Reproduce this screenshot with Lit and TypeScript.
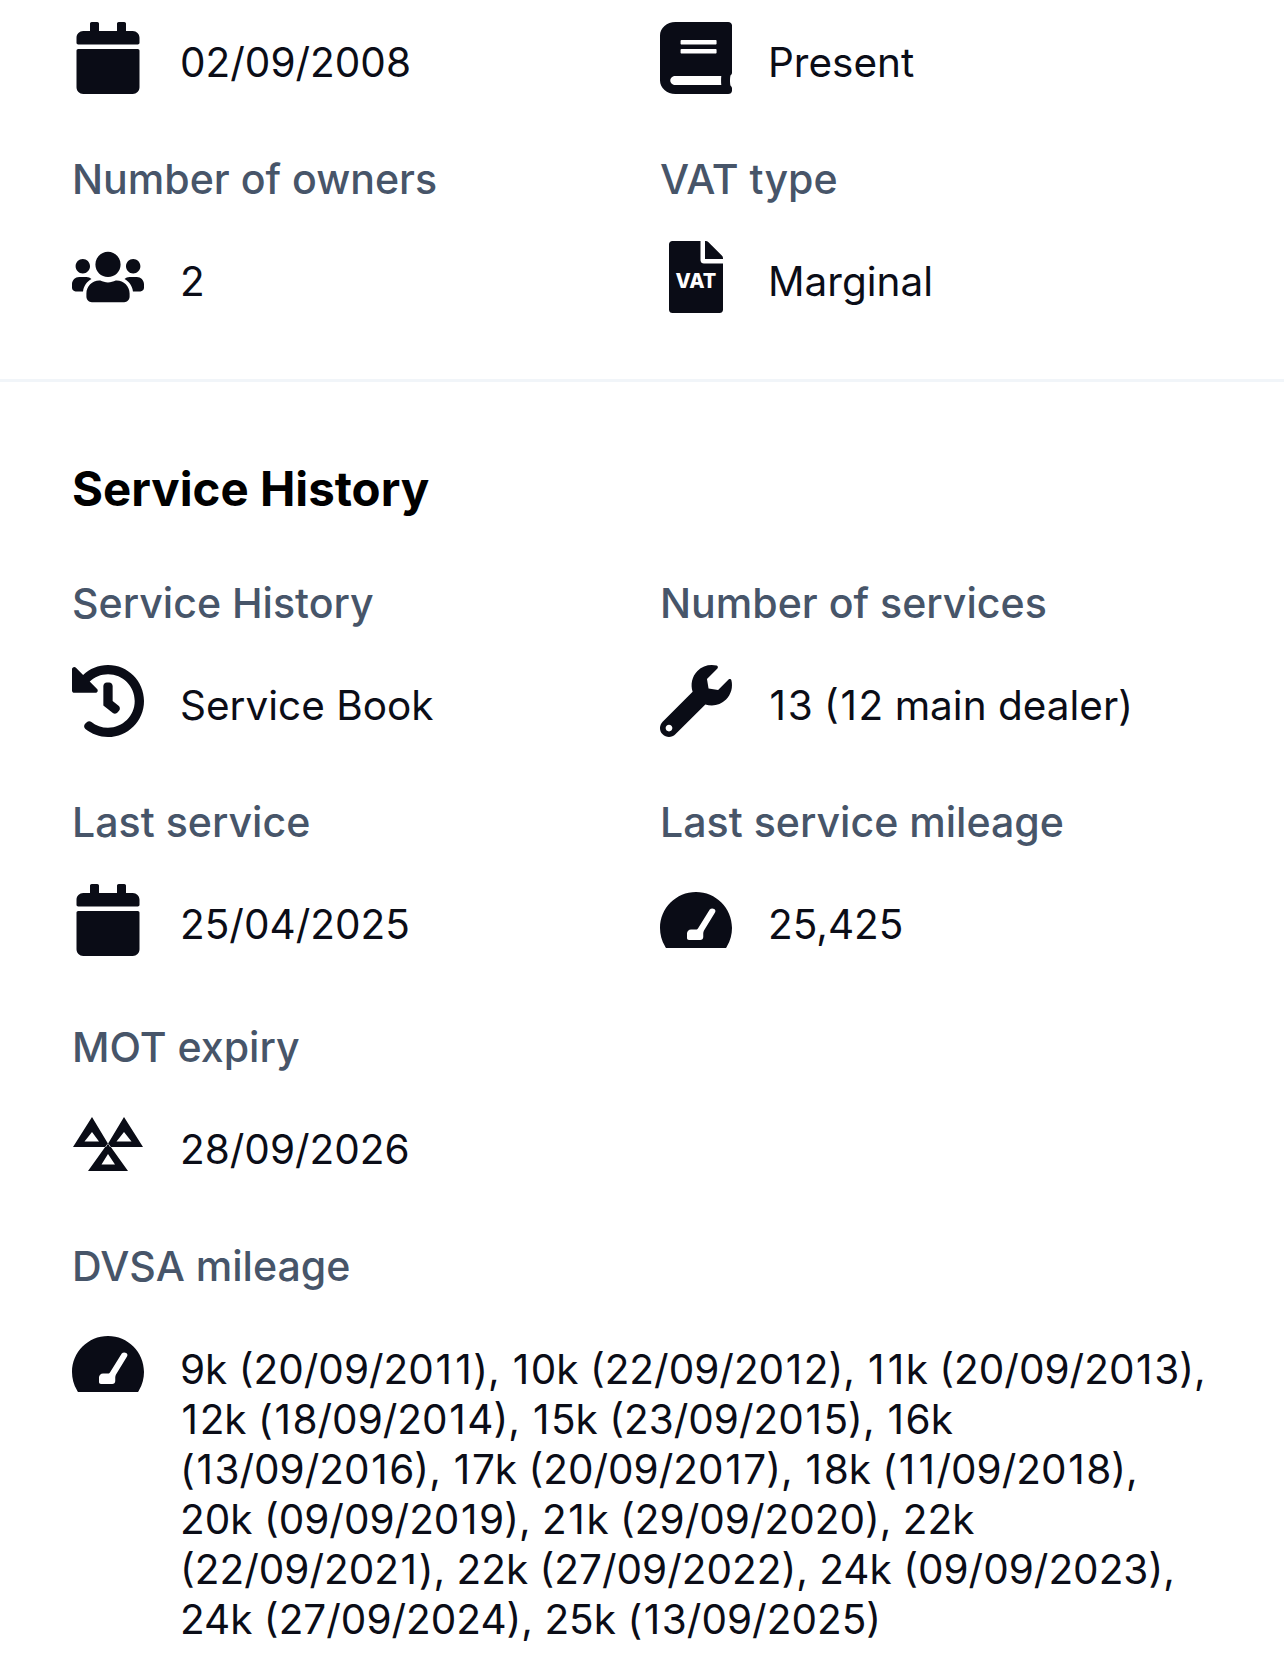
import { LitElement, html, css } from "lit";
import { customElement } from "lit/decorators.js";

const fa = (vb: string, d: string, par = "xMidYMid meet") => html`<svg class="ic" viewBox="${vb}" preserveAspectRatio="${par}" aria-hidden="true"><path d="${d}"></path></svg>`;

const calendar = fa("0 0 448 512", "M12 192h424c6.6 0 12 5.4 12 12v260c0 26.5-21.5 48-48 48H48c-26.5 0-48-21.5-48-48V204c0-6.6 5.4-12 12-12zm436-44v-36c0-26.5-21.5-48-48-48h-48V12c0-6.6-5.4-12-12-12h-40c-6.6 0-12 5.4-12 12v52H160V12c0-6.6-5.4-12-12-12h-40c-6.6 0-12 5.4-12 12v52H48C21.5 64 0 85.5 0 112v36c0 6.6 5.4 12 12 12h424c6.6 0 12-5.4 12-12z");
const book = fa("0 0 448 512", "M448 360V24c0-13.3-10.7-24-24-24H96C43 0 0 43 0 96v320c0 53 43 96 96 96h328c13.3 0 24-10.7 24-24v-16c0-7.5-3.5-14.3-8.9-18.7-4.2-15.4-4.2-59.3 0-74.7 5.4-4.3 8.9-11.1 8.9-18.6zM128 134c0-3.3 2.7-6 6-6h212c3.3 0 6 2.7 6 6v20c0 3.3-2.7 6-6 6H134c-3.3 0-6-2.7-6-6v-20zm0 64c0-3.3 2.7-6 6-6h212c3.3 0 6 2.7 6 6v20c0 3.3-2.7 6-6 6H134c-3.3 0-6-2.7-6-6v-20zm253.4 250H96c-17.7 0-32-14.3-32-32 0-17.6 14.4-32 32-32h285.4c-1.9 17.1-1.9 46.9 0 64z", "none");
const users = fa("0 0 640 512", "M96 224c35.3 0 64-28.7 64-64s-28.7-64-64-64-64 28.7-64 64 28.7 64 64 64zm448 0c35.3 0 64-28.7 64-64s-28.7-64-64-64-64 28.7-64 64 28.7 64 64 64zm32 32h-64c-17.6 0-33.5 7.1-45.1 18.6 40.3 22.1 68.9 62 75.1 109.4h66c17.7 0 32-14.3 32-32v-32c0-35.3-28.7-64-64-64zm-256 0c61.9 0 112-50.1 112-112S381.9 32 320 32 208 82.1 208 144s50.1 112 112 112zm76.8 32h-8.3c-20.8 10-43.9 16-68.5 16s-47.6-6-68.5-16h-8.3C179.6 288 128 339.6 128 403.2V432c0 26.5 21.5 48 48 48h288c26.5 0 48-21.5 48-48v-28.8c0-63.6-51.6-115.2-115.2-115.2zm-223.7-13.4C161.5 263.1 145.6 256 128 256H64c-35.3 0-64 28.7-64 64v32c0 17.7 14.3 32 32 32h65.9c6.3-47.4 34.9-87.3 75.2-109.4z");
const history = fa("8 8 496 496", "M504 255.531c.253 136.64-111.18 248.372-247.82 248.468-59.015.042-113.223-20.53-155.822-54.911-11.077-8.94-11.905-25.541-1.839-35.607l11.267-11.267c8.609-8.609 22.353-9.551 31.891-1.984C173.062 425.135 212.781 440 256 440c101.705 0 184-82.311 184-184 0-101.705-82.311-184-184-184-48.814 0-93.149 18.969-126.068 49.932l50.754 50.754c10.08 10.08 2.941 27.314-11.313 27.314H24c-8.837 0-16-7.163-16-16V38.627c0-14.254 17.234-21.393 27.314-11.314l49.372 49.372C129.209 34.136 189.552 8 256 8c136.81 0 247.747 110.78 248 247.531zm-180.912 78.784l9.823-12.63c8.138-10.463 6.253-25.542-4.21-33.679L288 256.349V152c0-13.255-10.745-24-24-24h-16c-13.255 0-24 10.745-24 24v135.651l65.409 50.874c10.463 8.137 25.541 6.253 33.679-4.21z");
const wrench = fa("0 0 512 512", "M507.73 109.1c-2.24-9.03-13.54-12.09-20.12-5.51l-74.36 74.36-67.88-11.31-11.31-67.88 74.36-74.36c6.62-6.62 3.43-17.9-5.66-20.16-47.38-11.74-99.55.91-136.58 37.93-39.64 39.64-50.55 97.1-34.05 147.2L18.74 402.76c-24.99 24.99-24.99 65.51 0 90.5 24.99 24.99 65.51 24.99 90.5 0l213.21-213.21c50.12 16.71 107.47 5.68 147.37-34.22 37.07-37.07 49.7-89.32 37.91-136.73zM64 472c-13.25 0-24-10.75-24-24 0-13.26 10.75-24 24-24s24 10.74 24 24c0 13.25-10.75 24-24 24z");
const gauge = html`<svg class="ic" viewBox="0 32 576 448" aria-hidden="true">
  <path fill-rule="evenodd" d="M288 32C128.94 32 0 160.94 0 320c0 52.8 14.25 102.26 39.06 144.8 2 5 6 15.2 12 15.2h474c6 0 10-10 12-15.2C561.75 422.26 576 372.8 576 320c0-159.06-128.94-288-288-288zM398 172c8-10 24-12 36-4 10 7 12 18 6 28L352 340c-4 8-6 14-6 22v30c0 14-10 24-24 24H232c-10 0-16-8-16-16v-36c0-18 14-32 32-32h40c8 0 12-2 18-12z"></path>
</svg>`;
const vat = html`<svg class="ic" viewBox="0 0 384 512" aria-hidden="true">
  <path d="M224 136V0H24C10.7 0 0 10.7 0 24v464c0 13.3 10.7 24 24 24h336c13.3 0 24-10.7 24-24V160H248c-13.2 0-24-10.8-24-24zm160-14.1v6.1H256V0h6.1c6.4 0 12.5 2.5 17 7l97.9 98c4.5 4.5 7 10.6 7 16.9z"></path>
  <text class="vat" x="192" y="335" text-anchor="middle">VAT</text>
</svg>`;
const mot = html`<svg class="ic" viewBox="0 1 72 56" aria-hidden="true">
  <path fill-rule="evenodd" d="M20 1L1 31H38ZM20 16L12.5 25.500H27ZM52 1L34 31H71ZM52 16L44.500 25.500H59.500ZM36 27L16 55H56ZM36 38L29.500 48.500H43Z"></path>
</svg>`;

// The digit 1 sits in a slightly wider slot in the reference's rendering of the face.
const digits = (text: string) =>
  text.split(/(1| )/).filter((part) => part !== "").map((part) =>
    part === " " ? " " : part === "1" ? html`<span class="one">1</span>` : html`<span>${part}</span>`);

const row = (icon: unknown, value: string) => html`
  <div class="value-row"><span class="icon">${icon}</span><span class="value">${digits(value)}</span></div>`;

const cell = (label: string, icon: unknown, value: string, cls = "") => html`
  <div class="cell ${cls}">
    <div class="label">${label}</div>
    ${row(icon, value)}
  </div>`;

@customElement("app-root")
export class AppRoot extends LitElement {
  static styles = css`
    :host { display: block; background: #fff; font-family: Inter, "Liberation Sans", sans-serif; color: #0b0d17; height: 1669px; overflow: hidden; }
    .sec { padding: 0 73px; }
    .sec.a { padding-top: 22px; padding-bottom: 66px; }
    .sec.b { padding-top: 77px; }
    .grid { display: grid; grid-template-columns: 588px 1fr; row-gap: 60px; }
    .first { margin-bottom: 60px; }
    .value-row { display: flex; align-items: flex-start; min-height: 72px; }
    .icon { flex: 0 0 72px; width: 72px; height: 72px; margin: 0 36px 0 -1px; display: flex; align-items: center; justify-content: center; }
    .ic { display: block; width: 100%; height: 100%; fill: #0a0c16; overflow: visible; }
    .value { font-size: 40.500px; line-height: 50px; padding-top: 16px; font-weight: 400; color: #0b0d17; }
    .one { padding: 0 1.600px; }
    .label { font-size: 41.100px; line-height: 50px; font-weight: 500; color: #475569; margin: 0 0 37px -1px; }
    .vat { font-family: Inter, sans-serif; font-weight: 800; font-size: 142px; fill: #fff; }
    hr { border: 0; height: 3px; background: #f1f5f9; margin: 0; }
    h2 { margin: 0 0 59px -1px; font-size: 47.400px; line-height: 60px; font-weight: 700; color: #000; }
    .long { grid-column: 1 / -1; }
    .extra { padding-bottom: 6px; }
    .long .value { width: 1030px; }
    .para .value { padding-top: 17px; }
  `;

  render() {
    return html`
      <div class="sec a">
        <div class="grid first">
          ${row(calendar, "02/09/2008")}
          ${row(book, "Present")}
        </div>
        <div class="grid">
          ${cell("Number of owners", users, "2")}
          ${cell("VAT type", vat, "Marginal")}
        </div>
      </div>
      <hr />
      <div class="sec b">
        <h2>Service History</h2>
        <div class="grid">
          ${cell("Service History", history, "Service Book")}
          ${cell("Number of services", wrench, "13 (12 main dealer)")}
          ${cell("Last service", calendar, "25/04/2025", "extra")}
          ${cell("Last service mileage", gauge, "25,425", "extra")}
          ${cell("MOT expiry", mot, "28/09/2026", "long")}
          ${cell("DVSA mileage", gauge, "9k (20/09/2011), 10k (22/09/2012), 11k (20/09/2013), 12k (18/09/2014), 15k (23/09/2015), 16k (13/09/2016), 17k (20/09/2017), 18k (11/09/2018), 20k (09/09/2019), 21k (29/09/2020), 22k (22/09/2021), 22k (27/09/2022), 24k (09/09/2023), 24k (27/09/2024), 25k (13/09/2025)", "long para")}
        </div>
      </div>
    `;
  }
}
